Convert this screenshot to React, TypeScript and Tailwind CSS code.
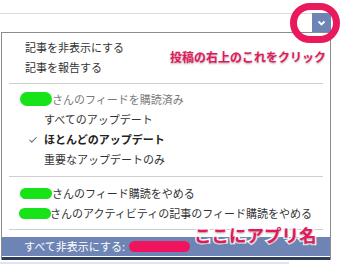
import { Check } from 'lucide-react';

const font = 'font-["Noto_Sans_CJK_JP","Noto_Sans",sans-serif]';

function Blob({ tall }: { tall?: boolean }) {
  return (
    <span
      className={`inline-block w-[32px] rounded-full bg-[#18e218] ${tall ? 'h-[14px]' : 'h-[11px]'}`}
    />
  );
}

function Row({ children, className = '' }: { children: React.ReactNode; className?: string }) {
  return <div className={`h-5 flex items-center whitespace-nowrap ${className}`}>{children}</div>;
}

function Sep({ className = '' }: { className?: string }) {
  return <div className={`h-px mx-[7px] bg-[#cfcfcf] ${className}`} />;
}

export default function App() {
  return (
    <div className={`relative w-[342px] h-[271px] bg-white overflow-hidden text-[11px] text-[#333] ${font}`}>
      {/* post header line + menu button */}
      <div className="flex h-[32px] pr-[11px]">
        <div className="flex-1 mt-[13px] h-px bg-[#dcdcdc]" />
        <div className="mt-[13px] w-[19px] h-[19px] bg-[#6d84b4] flex items-center justify-center">
          <svg width="9" height="6" viewBox="0 0 9 6">
            <polyline points="1.5,1.5 4.5,4.5 7.5,1.5" fill="none" stroke="white" strokeWidth="1.8" />
          </svg>
        </div>
      </div>

      {/* dropdown menu */}
      <div className="ml-[1px] mr-[11px] border-x border-t border-[#8c8c8c] pt-[4px]">
        <Row className="pl-[23px]">記事を非表示にする</Row>
        <Row className="pl-[23px]">記事を報告する</Row>
        <Sep className="mt-[6px]" />

        <Row className="mt-[5px] pl-[18px] text-[#7a7a7a]">
          <Blob tall />
          <span>さんのフィードを購読済み</span>
        </Row>
        <Row className="pl-[42px]">すべてのアップデート</Row>
        <Row className="pl-[26px] font-bold text-[#222]">
          <span className="w-[16px] flex items-center">
            <Check size={10} strokeWidth={2.5} className="text-[#666] mt-[2px]" />
          </span>
          ほとんどのアップデート
        </Row>
        <Row className="pl-[42px]">重要なアップデートのみ</Row>
        <Sep className="mt-[7px]" />

        <Row className="mt-[6px] pl-[18px]">
          <Blob />
          <span>さんのフィード購読をやめる</span>
        </Row>
        <Row className="pl-[17px]">
          <Blob />
          <span className="-ml-px">さんのアクティビティの記事のフィード購読をやめる</span>
        </Row>
        <Sep className="mt-[6px]" />

        <div className="mt-[7px] h-[19px] bg-[#6d84b4] flex items-center pl-[22px] text-white whitespace-nowrap">
          <span>すべて非表示にする:</span>
          <span className="ml-[4px] w-[61px] h-[11px] rounded-full bg-[#f0145e]" />
        </div>
        <div className="mt-px h-[3px] bg-[#2c3c5e]" />
      </div>
      <div className="mt-[2px] w-[289px] h-[2px] bg-[#dfe4ee]" />

      {/* annotations */}
      <div className="absolute left-[290px] top-[3px] w-[50px] h-[40px] rounded-full border-[7px] border-[#e9195c]" />
      <div className="absolute left-[170px] top-[49px] text-[12px] leading-[16px] font-bold text-[#e5185e] whitespace-nowrap [paint-order:stroke_fill] [-webkit-text-stroke:2.5px_white] [text-shadow:0_1px_2px_rgba(0,0,0,0.35)]">
        投稿の右上のこれをクリック
      </div>
      <div className="absolute left-[194px] top-[224px] text-[17.5px] leading-[22px] font-bold text-[#e5185e] whitespace-nowrap [paint-order:stroke_fill] [-webkit-text-stroke:3px_white] [text-shadow:0_1px_2px_rgba(0,0,0,0.4)]">
        ここにアプリ名
      </div>
    </div>
  );
}
